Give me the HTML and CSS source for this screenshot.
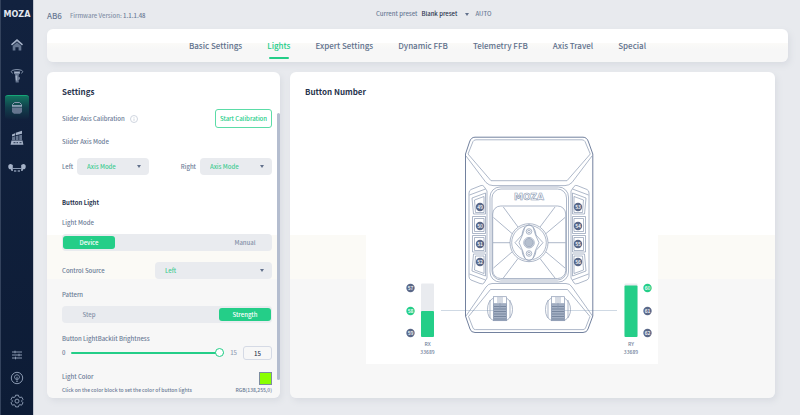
FILE: index.html
```html
<!DOCTYPE html>
<html lang="en">
<head>
<meta charset="utf-8">
<title>MOZA AB6</title>
<link rel="stylesheet" href="styles.css">
</head>
<body>
<div class="app">
  <nav class="sidebar" aria-label="Devices">
    <div class="logo">MOZA</div>
    <div class="nav-group">
      <button class="nav-item" aria-label="Home">
        <svg width="14" height="14" viewBox="0 0 14 14"><path class="fill" d="M7 1 13 6.2l-1 1.2L7 3.2 2 7.4 1 6.2z"/><path class="dim" d="M7 4.2 11.3 8v4.5H8.6V9.3H5.4v3.2H2.7V8z"/></svg>
      </button>
      <button class="nav-item" aria-label="Flight base">
        <svg width="14" height="16" viewBox="0 0 14 16"><path class="line" d="M2.8 5.2C.6 4.4 1 2.6 3 2.2c2.400-.8 5.600-.8 8 0 2 .4 2.400 2.200.2 3"/><path class="fill" d="M4 3.500h6L9.600 6H4.400z"/><path class="dim" d="M4.200 5.300h5.400l-.9 2v5.700c0 1.200.5 1.600-.5 1.600H6.200c-.8 0-.6-1-.6-1.600V8z"/><path class="fill" d="M5.300 7.500h1.900v5H5.800zM8.700 9l1.100.6-.4 2-.9.4z"/></svg>
      </button>
      <button class="nav-item nav-item--active" aria-label="Button base">
        <svg width="12" height="14" viewBox="0 0 12 14"><path class="line" d="M1.500 5V3.500L3.500 1.500h5l2 2V5"/><path class="fill" d="M1 4.200h10v1.500H1z"/><path class="dim" d="M1 6.500h10V11l-2 1.800H3L1 11z"/></svg>
      </button>
      <button class="nav-item" aria-label="Pedals">
        <svg width="14" height="16" viewBox="0 0 14 16"><path class="fill" d="M2 4.500 5 3.200v2.200L2 6.500zM5.700 2.800 12 .8v3L5.700 5.200z"/><path class="dim" d="M2 7.300 5 6.200V10H2zM5.700 6l2.800-.6V10H5.700zM9.200 5.200l2.800-.5V10H9.200z"/><path class="fill" d="M1.500 10.600h11l.9 4.100H.6z"/><path class="cut" d="M3.500 12.700h2M6.500 12.700h1.500M9.500 12.700h2"/></svg>
      </button>
      <button class="nav-item" aria-label="Yoke">
        <svg width="18" height="12" viewBox="0 0 18 12"><path class="fill" d="M2.800 1a2.600 2.600 0 1 0 .1 5.200l.6 1.800h1.300V2zM15.200 1a2.600 2.600 0 1 1-.1 5.200l-.6 1.800h-1.300V2z"/><path class="line" d="M4.500 5.500h9"/><path class="dim" d="M6 7h2.300v2H6zM9.700 7H12v2H9.700z"/></svg>
      </button>
    </div>
    <div class="nav-group nav-group--bottom">
      <button class="nav-item" aria-label="Preferences">
        <svg width="12" height="12" viewBox="0 0 12 12"><path class="line" d="M1 3h10M1 6h10M1 9h10M4 1.700v2.600M8 4.700v2.600M4.500 7.700v2.600"/></svg>
      </button>
      <button class="nav-item" aria-label="Help">
        <svg width="14" height="14" viewBox="0 0 14 14"><circle class="line" cx="7" cy="7" r="5.700"/><path class="line" d="M5.900 8.300C3.500 6.700 4.600 3.800 7 3.800s3.500 2.900 1.100 4.500zM6 10.200h2M7 5.800v2.500"/></svg>
      </button>
      <button class="nav-item" aria-label="Options">
        <svg width="14" height="14" viewBox="0 0 14 14"><path class="line" d="M5.600 1.200h2.800l.5 1.700 1 .6 1.700-.5L13 5.400l-1.200 1.200v1L13 8.800l-1.400 2.400-1.700-.5-1 .6-.5 1.600H5.600l-.5-1.600-1-.6-1.700.5L1 8.800l1.200-1.200v-1L1 5.400 2.400 3l1.700.5 1-.6z"/><circle class="line" cx="7" cy="7.100" r="2"/></svg>
      </button>
    </div>
  </nav>

  <div class="page">
    <header class="topbar">
      <div class="device">
        <h1 class="device-name">AB6</h1>
        <span class="firmware">Firmware Version: <b>1.1.1.48</b></span>
      </div>
      <div class="preset">
        <label for="preset">Current preset</label>
        <span class="picker picker--plain">
          <select id="preset"><option>Blank preset</option></select>
          <svg class="caret" viewBox="0 0 4 3"><path d="M0 0h4L2 3z"/></svg>
        </span>
        <span class="auto">AUTO</span>
      </div>
    </header>

    <nav class="tabs" aria-label="Sections">
      <a href="#basic">Basic Settings</a>
      <a href="#lights" class="current" aria-current="page">Lights</a>
      <a href="#expert">Expert Settings</a>
      <a href="#dynamic">Dynamic FFB</a>
      <a href="#telemetry">Telemetry FFB</a>
      <a href="#travel">Axis Travel</a>
      <a href="#special">Special</a>
    </nav>

    <main class="panels">
      <section class="panel settings">
        <h2>Settings</h2>
        <div class="row calibration">
          <span class="label">Slider Axis Calibration</span>
          <svg class="info" width="8" height="8" viewBox="0 0 8 8"><circle cx="4" cy="4" r="3.500"/><path d="M4 3.500v2.300M4 2v.7"/></svg>
          <button class="outline-button">Start Calibration</button>
        </div>
        <div class="label axis-title">Slider Axis Mode</div>
        <div class="row axis-modes">
          <div class="axis">
            <label class="label" for="axis-left">Left</label>
            <span class="picker">
              <select id="axis-left"><option>Axis Mode</option></select>
              <svg class="caret" viewBox="0 0 4 3"><path d="M0 0h4L2 3z"/></svg>
            </span>
          </div>
          <div class="axis">
            <label class="label" for="axis-right">Right</label>
            <span class="picker">
              <select id="axis-right"><option>Axis Mode</option></select>
              <svg class="caret" viewBox="0 0 4 3"><path d="M0 0h4L2 3z"/></svg>
            </span>
          </div>
        </div>
        <h3>Button Light</h3>
        <div class="label mode-title">Light Mode</div>
        <div class="segmented" role="radiogroup" aria-label="Light Mode">
          <label><input type="radio" name="mode" checked><span>Device</span></label>
          <label><input type="radio" name="mode"><span>Manual</span></label>
        </div>
        <div class="row source">
          <label class="label" for="source">Control Source</label>
          <span class="picker picker--wide">
            <select id="source"><option>Left</option></select>
            <svg class="caret" viewBox="0 0 4 3"><path d="M0 0h4L2 3z"/></svg>
          </span>
        </div>
        <div class="label section-label">Pattern</div>
        <div class="segmented" role="radiogroup" aria-label="Pattern">
          <label><input type="radio" name="pattern"><span>Step</span></label>
          <label><input type="radio" name="pattern" checked><span>Strength</span></label>
        </div>
        <label class="label section-label" for="brightness">Button LightBacklit Brightness</label>
        <div class="row brightness">
          <span class="label">0</span>
          <input type="range" id="brightness" min="0" max="15" value="15">
          <span class="max">15</span>
          <input type="text" class="value" value="15" aria-label="Brightness value">
        </div>
        <div class="row color">
          <label class="label" for="color">Light Color</label>
          <input type="color" id="color" value="#8aff00">
        </div>
        <div class="row hint">
          <span>Click on the color block to set the color of button lights</span>
          <span>RGB(138,255,0)</span>
        </div>
        <div class="scrollbar"></div>
      </section>

      <section class="panel buttons">
        <h2>Button Number</h2>
        <div class="stage">
        <svg class="diagram" width="292" height="236" viewBox="366 128 292 236" role="img" aria-label="Button layout">
          <rect class="paper" x="366" y="128" width="292" height="236"/>
          <path class="leader" d="M441 310.500h54M563 310.500h54"/>
          <g class="outline strong">
            <path d="M465.500 154 469.500 142Q471 137.200 475 137.200H583Q587 137.200 588.500 142L592.800 154V316L588 329Q587 332.500 583 332.500H475Q471 332.500 470 329L465.500 316Z"/>
          </g>
          <g class="outline">
            <path d="M468 154 473 141.500Q474 139.800 476 139.800H582Q584 139.800 585 141.500L590.300 154 567 180.700H491Z"/>
            <path d="M466 156 486 182.500Q489 185.600 493 185.600H565Q569 185.600 572 182.500L592 156"/>
            <rect x="490" y="187" width="78.500" height="95" rx="10"/>
            <rect x="492" y="189" width="74.500" height="91" rx="9"/>
            <rect x="492.700" y="206" width="73" height="72.500" rx="8"/>
            <path d="M493 242.700H510M548 242.700H565.500M503.300 207 518 227M555 207 540 227M493.500 217.500 512 233.500M565 217.500 546 233.500M493.500 268 512 252M565 268 546 252M503.300 278 518 258.500M555 278 540 258.500"/>
            <circle cx="529" cy="242.700" r="19"/>
            <circle cx="529" cy="242.700" r="17.300"/>
            <path d="M529 224.500Q535.500 227 536 235L543 242.700 536 250.500Q535.500 258 529 261Q522.500 258 522 250.500L515 242.700 522 235Q522.500 227 529 224.500Z"/>
            <path d="M525 227Q523 235 519 242.700 523 250 525 258.500M533 227Q535 235 539 242.700 535 250 533 258.500"/>
            <circle cx="529" cy="231.500" r="2.800"/><circle cx="529" cy="253.500" r="2.800"/>
            <circle cx="529" cy="231.500" r="1.300"/><circle cx="529" cy="253.500" r="1.300"/>
            <circle class="hub" cx="529" cy="242.700" r="4.300"/><circle cx="529" cy="242.700" r="5.300"/>
          </g>
          <g id="button-bank" class="outline">
            <path d="M469 193Q469 190.500 471 189.500L481 185.500Q483 185 484 186.500L487 191V278L484 283Q483 284.500 480 283.500L471 280Q469 279 469 276.500Z"/>
            <path d="M472 198 485.500 193V214H473.500ZM474.500 200 484 196.500V212.500H475.500Z"/>
            <path d="M472.500 216.500H485.500V233.500H472.500ZM474.500 218.500H484V231.500H474.500ZM472.500 235.500H485.500V252H472.500ZM474.500 237.500H484V250.500H474.500Z"/>
            <path d="M473.500 254H485.500V276L472 271ZM475.500 256H484V273.500L474.500 270Z"/>
            <path d="M469.500 274 485.500 280M469.500 195 485.500 189"/>
          </g>
          <use href="#button-bank" transform="matrix(-1 0 0 1 1058 0)"/>
          <g class="outline">
            <path d="M466 316 486 287Q488.500 283.500 492 283.500H566Q570 283.500 572 287L592.500 316"/>
            <path d="M468.500 316.500 490.500 289.500H567.500L590 316.500 585.500 328Q584.800 329.600 583 329.600H475.500Q473.500 329.600 473 328Z"/>
          </g>
          <g id="wheel" class="outline">
            <path d="M493.500 298Q487.500 301 487.500 309.500T493.500 320.500H506.500Q512.500 317 512.500 309.500T506.500 298M490 300V318M510 300V318"/>
            <rect class="paper" x="493.500" y="296.700" width="13" height="24"/>
            <path d="M493.500 303.500H506.500M498 297V303M502 297V303"/>
            <path class="tread" d="M493.500 304.500h13v16h-13z"/>
            <path class="grip" d="M494 306.500h12M494 309h12M494 311.500h12M494 314h12M494 316.500h12M494 319h12"/>
            <path d="M500 297V309"/>
          </g>
          <use href="#wheel" transform="translate(58 0)"/>
          <text class="mark" x="529" y="199.500">MOZA</text>
          <g class="pins">
            <circle cx="480" cy="207" r="4.200"/><text x="480" y="209">49</text>
            <circle cx="480" cy="226" r="4.200"/><text x="480" y="228">50</text>
            <circle cx="480" cy="244" r="4.200"/><text x="480" y="246">51</text>
            <circle cx="480" cy="262" r="4.200"/><text x="480" y="264">52</text>
            <circle cx="578" cy="207" r="4.200"/><text x="578" y="209">53</text>
            <circle cx="578" cy="226" r="4.200"/><text x="578" y="228">54</text>
            <circle cx="578" cy="244" r="4.200"/><text x="578" y="246">55</text>
            <circle cx="578" cy="262" r="4.200"/><text x="578" y="264">56</text>
            <circle cx="410.500" cy="288" r="4.200"/><text x="410.500" y="290">57</text>
            <circle class="on" cx="410.500" cy="311" r="4.200"/><text x="410.500" y="313">58</text>
            <circle cx="410.500" cy="333" r="4.200"/><text x="410.500" y="335">59</text>
            <circle class="on" cx="647.500" cy="288" r="4.200"/><text x="647.500" y="290">60</text>
            <circle cx="647.500" cy="311" r="4.200"/><text x="647.500" y="313">61</text>
            <circle cx="647.500" cy="333" r="4.200"/><text x="647.500" y="335">62</text>
          </g>
          <rect class="bar" x="421" y="283.500" width="13" height="53.500" rx="1"/>
          <rect class="bar-fill" x="421" y="311" width="13" height="26" rx="1"/>
          <rect class="bar" x="624.500" y="283.500" width="13" height="53.500" rx="1"/>
          <rect class="bar-fill" x="624.500" y="285.500" width="13" height="51.500" rx="1"/>
          <g class="readout">
            <text x="427.500" y="346">RX</text><text x="427.500" y="354">33689</text>
            <text x="631" y="346">RY</text><text x="631" y="354">33689</text>
          </g>
        </svg>
        </div>
      </section>
    </main>
  </div>
</div>
</body>
</html>
```
FILE: styles.css
```css
:root {
  --green: #24ce88;
  --text: #6b7b96;
  --dark: #28334d;
  --field: #e9ebef;
}

* {
  box-sizing: border-box;
}

body {
  margin: 0;
  background: #e8eaee;
  color: var(--text);
  font: 500 6px/10px "Noto Sans CJK SC", "Noto Sans", sans-serif;
}

h1, h2, h3 {
  margin: 0;
}

button, input, select {
  margin: 0;
  padding: 0;
  border: 0;
  background: none;
  color: inherit;
  font: inherit;
}

.app {
  display: flex;
  min-height: 100vh;
}

/* Sidebar */
.sidebar {
  display: flex;
  flex-direction: column;
  align-items: center;
  flex: 0 0 34px;
  padding: 10px 0 3px;
  border-left: 1px solid #34435d;
  border-right: 1px solid #c3c8d1;
  background: linear-gradient(#12223f, #0d1c36);
}

.logo {
  margin-bottom: 13px;
  color: #e3e8f0;
  font: bold 8px/10px "DejaVu Sans", sans-serif;
}

.nav-group {
  display: flex;
  flex-direction: column;
  gap: 7px;
}

.nav-group--bottom {
  gap: 0;
  margin-top: auto;
}

.nav-item {
  display: grid;
  place-items: center;
  width: 24px;
  height: 24px;
  border-radius: 3px;
}

.nav-group--bottom .nav-item {
  height: 23px;
}

.nav-item--active {
  border-top: 1px solid #17a577;
  background: linear-gradient(#12735f, #123f4c 50%, #11223d);
}

.nav-item .fill {
  fill: #a5b2c8;
}

.nav-item .dim {
  fill: #65758f;
}

.nav-item .line {
  fill: none;
  stroke: #8998b0;
}

.nav-item .cut {
  stroke: #263650;
}

/* Header */
.page {
  display: flex;
  flex-direction: column;
  flex: 1;
  min-width: 0;
  padding: 0 12px 17px 13px;
}

.topbar {
  display: grid;
  grid-template-columns: 44.4% auto;
  height: 29px;
  padding-top: 9px;
}

.device {
  display: flex;
  align-items: center;
  gap: 8px;
  height: 14px;
}

.device-name {
  font-size: 8px;
  font-weight: 500;
}

.firmware {
  color: #8491a7;
}

.firmware b {
  color: var(--text);
  font-weight: 500;
}

.preset {
  display: flex;
  align-items: center;
  height: 10px;
  white-space: nowrap;
}

.auto {
  margin-left: 6px;
}

.tabs {
  display: flex;
  justify-content: center;
  gap: 25px;
  height: 33px;
  border-radius: 6px;
  background: linear-gradient(#fff 14px, #fbfaf8 14px, #f7f7f7 20px);
  box-shadow: 2px 3px 6px #d9dce2;
  font-size: 8px;
  line-height: 33px;
}

.tabs a {
  display: grid;
  justify-items: center;
  color: #5f718c;
  text-decoration: none;
  white-space: nowrap;
}

.tabs .current {
  grid-template-rows: 28px 2px;
  color: var(--green);
}

.tabs .current::after {
  content: "";
  width: 20px;
  height: 2px;
  border-radius: 1px;
  background: var(--green);
}

/* Panels */
.panels {
  display: grid;
  grid-template-columns: 233px 1fr;
  gap: 10px;
  flex: 1;
  padding: 10px 13px 0 0;
}

.panel {
  border-radius: 6px;
  background: linear-gradient(#fff 163px, #fbfaf6 163px, #fbfaf6 207px, #f7f7f7 207px);
  box-shadow: 2px 3px 6px #d9dce2;
}

.panel h2 {
  color: var(--dark);
  font-size: 8px;
  font-weight: 700;
  line-height: 12px;
}

.settings {
  position: relative;
  padding: 14px 8px 3px 15px;
}

.row {
  display: flex;
  align-items: center;
  justify-content: space-between;
}

.label {
  display: block;
}

.calibration {
  height: 19px;
  margin-top: 11px;
}

.info {
  margin: 0 auto 0 5px;
  fill: none;
  stroke: #cfd5df;
}

.outline-button {
  width: 57px;
  height: 19px;
  border: 1px solid #5bdca7;
  border-radius: 3px;
  color: var(--green);
  white-space: nowrap;
}

.axis-title {
  margin-top: 9px;
}

.axis-modes {
  margin-top: 11px;
}

.axis {
  display: flex;
  align-items: center;
  gap: 4px;
}

.picker {
  position: relative;
  display: block;
  width: 72px;
  height: 17px;
  border-radius: 4px;
  background: var(--field);
}

.picker--wide {
  width: 117px;
}

.picker select {
  appearance: none;
  display: block;
  width: 100%;
  height: 100%;
  padding-left: 10px;
  color: #3fcb92;
}

.caret {
  position: absolute;
  top: 7px;
  right: 8px;
  width: 4px;
  height: 3px;
  fill: #62718c;
}

.picker--plain {
  width: 48px;
  height: 10px;
  margin-left: 4px;
  background: none;
}

.picker--plain select {
  padding-left: 0;
  color: var(--dark);
}

.picker--plain .caret {
  top: 4px;
  right: 0;
}

.settings h3 {
  margin-top: 23px;
  color: var(--dark);
  font-size: 6px;
  font-weight: 700;
}

.mode-title {
  margin-top: 10px;
}

.segmented {
  display: flex;
  justify-content: space-between;
  height: 17px;
  margin-top: 6px;
  padding: 2px 1px;
  border-radius: 4px;
  background: var(--field);
}

.segmented label {
  width: 52px;
}

.segmented input {
  position: absolute;
  opacity: 0;
}

.segmented span {
  display: block;
  border-radius: 3px;
  color: #8491a7;
  line-height: 13px;
  text-align: center;
}

.segmented :checked + span {
  background: var(--green);
  color: #fff;
}

.source,
.section-label {
  margin-top: 11px;
}

.brightness {
  height: 14px;
  margin-top: 2px;
}

.brightness [type="range"] {
  appearance: none;
  flex: 1;
  min-width: 0;
  height: 10px;
  margin: 0 6px;
}

.brightness [type="range"]::-webkit-slider-runnable-track {
  height: 2px;
  border-radius: 1px;
  background: var(--green);
}

.brightness [type="range"]::-webkit-slider-thumb {
  appearance: none;
  width: 9px;
  height: 9px;
  margin-top: -4px;
  border: 1px solid var(--green);
  border-radius: 50%;
  background: #fff;
}

.max {
  color: #93a0b4;
}

.brightness .value {
  width: 29px;
  height: 14px;
  margin-left: 6px;
  border: 1px solid #d5dae5;
  border-radius: 3px;
  color: var(--dark);
  text-align: center;
}

.color {
  align-items: flex-start;
  height: 13px;
  margin-top: 12px;
}

.color input {
  appearance: none;
  width: 13px;
  height: 13px;
  border: 1px solid #7d8ca0;
}

.color input::-webkit-color-swatch-wrapper {
  padding: 0;
}

.color input::-webkit-color-swatch {
  border: 0;
}

.hint {
  font-size: 5px;
  white-space: nowrap;
}

.scrollbar {
  position: absolute;
  top: 41px;
  right: 0;
  bottom: 18px;
  width: 3px;
  border-radius: 2px;
  background: #b4bdcf;
}

/* Button diagram */
.buttons {
  padding: 14px 15px 0;
}

.stage {
  display: flex;
  justify-content: center;
  margin-top: 30px;
  padding-right: 41px;
}

.diagram {
  flex: none;
  font-family: "Noto Sans CJK SC", sans-serif;
  text-anchor: middle;
}

.paper {
  fill: #fff;
}

.leader {
  stroke: #cfd9e4;
}

.outline {
  fill: none;
  stroke: #8b99b2;
  stroke-width: 0.7;
}

.strong {
  stroke: #72819e;
  stroke-width: 1;
}

.hub {
  fill: #b5bfce;
}

.tread {
  fill: #a4b0c4;
}

.grip {
  stroke: #65758f;
}

.mark {
  fill: #fff;
  stroke: #8b99b2;
  stroke-width: 0.6;
  font: bold 9px "DejaVu Sans", sans-serif;
}

.pins circle {
  fill: #5a6888;
}

.pins .on {
  fill: var(--green);
}

.pins text {
  fill: #fff;
  font-size: 5px;
}

.bar {
  fill: var(--field);
}

.bar-fill {
  fill: var(--green);
}

.readout {
  fill: #74839c;
  font-size: 5px;
}
```
